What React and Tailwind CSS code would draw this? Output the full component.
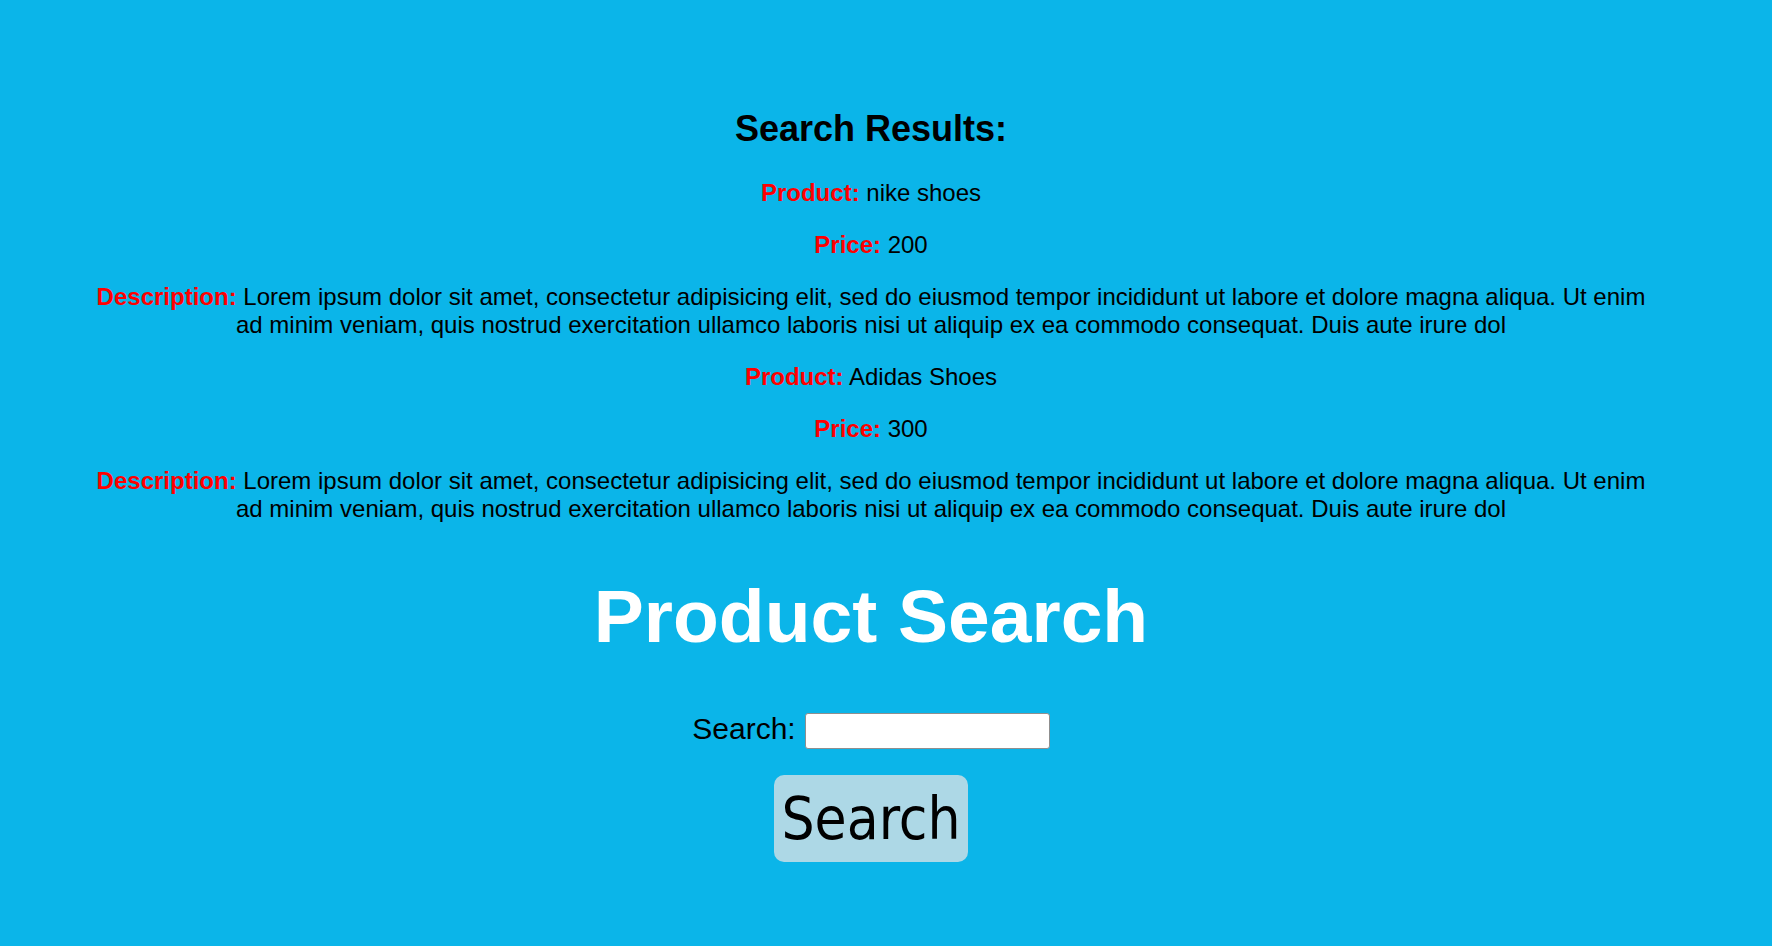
const products = [
  {
    name: "nike shoes",
    price: 200,
    description:
      "Lorem ipsum dolor sit amet, consectetur adipisicing elit, sed do eiusmod tempor incididunt ut labore et dolore magna aliqua. Ut enim ad minim veniam, quis nostrud exercitation ullamco laboris nisi ut aliquip ex ea commodo consequat. Duis aute irure dol"
  },
  {
    name: "Adidas Shoes",
    price: 300,
    description:
      "Lorem ipsum dolor sit amet, consectetur adipisicing elit, sed do eiusmod tempor incididunt ut labore et dolore magna aliqua. Ut enim ad minim veniam, quis nostrud exercitation ullamco laboris nisi ut aliquip ex ea commodo consequat. Duis aute irure dol"
  }
];

const Field = ({ label, children }) => (
  <p className="m-0 text-[24px] leading-[28px]">
    <span className="font-bold text-[#ff0000]">{label}:</span> {children}
  </p>
);

export default function App() {
  return (
    <div className="min-h-[946px] w-full bg-[#0bb5e9] font-['Liberation_Sans',Arial,sans-serif] text-black">
      <div className="flex w-[1742px] flex-col items-center pt-[108px] pb-[85px] text-center">
        <h2 className="m-0 text-[36px] font-bold leading-[41px]">Search Results:</h2>

        <div className="mt-[30px] flex w-full flex-col gap-[24px] px-[90px]">
          {products.map(product => (
            <div key={product.name} className="flex flex-col gap-[24px]">
              <Field label="Product">{product.name}</Field>
              <Field label="Price">{product.price}</Field>
              <Field label="Description">{product.description}</Field>
            </div>
          ))}
        </div>

        <h1 className="mt-[51px] text-[75px] font-bold leading-[85px] text-white">Product Search</h1>

        <div className="mt-[53px] flex items-center gap-[9px]">
          <label className="mb-[4px] text-[30px] leading-[34px]">Search:</label>
          <input
            type="text"
            className="h-[36px] w-[245px] rounded-[3px] border border-[#8f8f8f] bg-white px-2 text-[18px] outline-none"
          />
        </div>

        <button
          type="button"
          className="mt-[25px] flex h-[87px] w-[194px] items-center justify-center rounded-[10px] bg-[#add8e6] font-['DejaVu_Sans_Condensed','DejaVu_Sans',sans-serif] text-[58px] leading-none text-black"
        >
          Search
        </button>
      </div>
    </div>
  );
}
